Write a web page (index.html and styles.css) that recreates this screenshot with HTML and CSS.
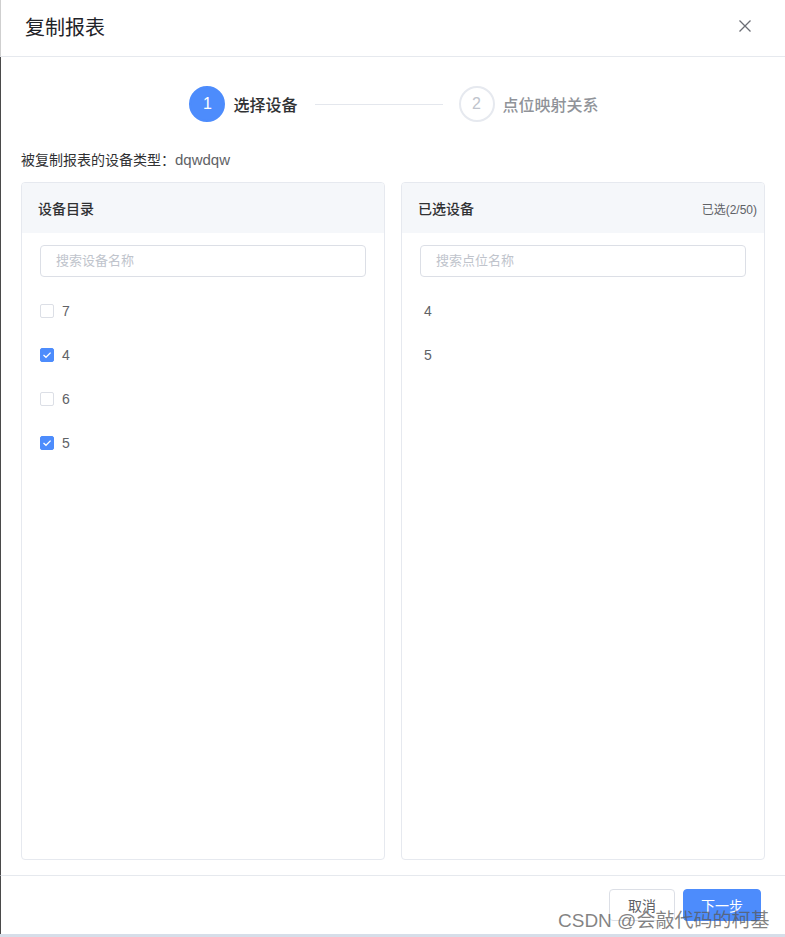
FILE: index.html
```html
<!DOCTYPE html>
<html lang="zh-CN">
<head>
<meta charset="utf-8">
<title>复制报表</title>
<link rel="stylesheet" href="styles.css">
</head>
<body>
<div class="dialog">
  <div class="header">
    <span class="title">复制报表</span>
    <svg class="close" width="14" height="14" viewBox="0 0 14 14"><path d="M1.5 1.5 L12.5 12.5 M12.5 1.5 L1.5 12.5" stroke="#6b6e75" stroke-width="1.3" fill="none"/></svg>
  </div>
  <div class="body">
    <div class="steps">
      <div class="step active"><span class="circle">1</span><span class="step-label">选择设备</span></div>
      <div class="step-line"></div>
      <div class="step"><span class="circle">2</span><span class="step-label">点位映射关系</span></div>
    </div>
    <div class="desc">被复制报表的设备类型：<span class="desc-val">dqwdqw</span></div>
    <div class="panels">
      <div class="panel">
        <div class="panel-head"><span class="panel-title">设备目录</span></div>
        <div class="panel-body">
          <div class="search">搜索设备名称</div>
          <ul class="list">
            <li class="item"><span class="cb"></span><span>7</span></li>
            <li class="item"><span class="cb checked"><svg width="10" height="8" viewBox="0 0 10 8"><path d="M1.5 4 L4 6.3 L8.6 1.6" stroke="#fff" stroke-width="1.3" fill="none"/></svg></span><span>4</span></li>
            <li class="item"><span class="cb"></span><span>6</span></li>
            <li class="item"><span class="cb checked"><svg width="10" height="8" viewBox="0 0 10 8"><path d="M1.5 4 L4 6.3 L8.6 1.6" stroke="#fff" stroke-width="1.3" fill="none"/></svg></span><span>5</span></li>
          </ul>
        </div>
      </div>
      <div class="panel">
        <div class="panel-head"><span class="panel-title">已选设备</span><span class="count">已选(2/50)</span></div>
        <div class="panel-body">
          <div class="search">搜索点位名称</div>
          <ul class="list plain">
            <li class="item"><span>4</span></li>
            <li class="item"><span>5</span></li>
          </ul>
        </div>
      </div>
    </div>
  </div>
  <div class="footer">
    <button class="btn">取消</button>
    <button class="btn primary">下一步</button>
  </div>
  <div class="watermark">CSDN @会敲代码的柯基</div>
</div>
</body>
</html>
```

FILE: styles.css
```css
* { box-sizing: border-box; }
html, body { margin: 0; padding: 0; }
body {
  background: #d6dee9;
  font-family: "Liberation Sans", "Noto Sans CJK SC", sans-serif;
  color: #303133;
  width: 785px;
  height: 937px;
  overflow: hidden;
}
.dialog {
  position: relative;
  width: 785px;
  height: 934px;
  background: #fff;
  display: flex;
  flex-direction: column;
}
.header {
  height: 57px;
  flex: none;
  border-left: 1px solid #cfcfcf;
  border-bottom: 1px solid #e6e9ee;
  padding: 0 33px 0 24px;
  display: flex;
  align-items: center;
  justify-content: space-between;
}
.title {
  font-size: 20px;
  color: #1f2329;
  margin-top: -3px;
}
.close { margin-top: -5px; }
.body {
  flex: 1;
  border-left: 1px solid #4a4a4a;
  padding: 29px 20px 15px 20px;
  display: flex;
  flex-direction: column;
}
.steps {
  display: flex;
  align-items: center;
  justify-content: center;
  height: 36px;
  padding-left: 2px;
}
.step { display: flex; align-items: center; }
.circle {
  width: 36px;
  height: 36px;
  border-radius: 50%;
  border: 2px solid #e6e9ef;
  color: #c0c4cc;
  font-size: 16px;
  display: flex;
  align-items: center;
  justify-content: center;
}
.step.active .circle {
  background: #4d8cfc;
  border-color: #4d8cfc;
  color: #fff;
}
.step-label {
  margin-left: 8px;
  font-size: 16px;
  font-weight: 500;
  color: #909399;
}
.step.active .step-label { color: #303133; }
.step-line {
  width: 128px;
  height: 1px;
  background: #e4e7ed;
  margin: 0 16px 0 17px;
}
.desc {
  margin-top: 28px;
  font-size: 14px;
  line-height: 20px;
  height: 20px;
  color: #303133;
}
.desc-val { font-size: 15px; color: #606266; }
.panels {
  margin-top: 12px;
  flex: 1;
  display: flex;
  gap: 16px;
}
.panel {
  flex: 1;
  border: 1px solid #e6e9ef;
  border-radius: 4px;
  display: flex;
  flex-direction: column;
  overflow: hidden;
}
.panel-head {
  height: 50px;
  background: #f5f7fa;
  display: flex;
  align-items: center;
  justify-content: space-between;
  padding: 0 7px 0 16px;
}
.panel-title { font-size: 14px; font-weight: 500; color: #303133; }
.count { font-size: 12px; color: #606266; }
.panel-body { padding: 12px 18px; }
.search {
  height: 32px;
  border: 1px solid #dcdfe6;
  border-radius: 4px;
  padding-left: 15px;
  font-size: 13px;
  line-height: 30px;
  color: #c0c4cc;
}
.list {
  list-style: none;
  margin: 12px 0 0 0;
  padding: 0;
}
.item {
  height: 44px;
  display: flex;
  align-items: center;
  font-size: 14px;
  color: #606266;
}
.list.plain .item { padding-left: 4px; }
.cb {
  width: 14px;
  height: 14px;
  border: 1px solid #dcdfe6;
  border-radius: 2px;
  margin-right: 8px;
  display: flex;
  align-items: center;
  justify-content: center;
}
.cb.checked { background: #4d8cfc; border-color: #4d8cfc; }
.footer {
  height: 59px;
  flex: none;
  border-top: 1px solid #e6e9ee;
  border-left: 1px solid #4a4a4a;
  display: flex;
  justify-content: flex-end;
  align-items: flex-start;
  gap: 8px;
  padding: 13px 24px 0 0;
}
.btn {
  height: 32px;
  padding: 0 18px;
  border: 1px solid #dcdfe6;
  border-radius: 4px;
  background: #fff;
  font-family: inherit;
  font-size: 14px;
  color: #606266;
}
.btn.primary {
  background: #4d8cfc;
  border-color: #4d8cfc;
  color: #fff;
  padding: 0 17px;
}
.watermark {
  position: absolute;
  left: 558px;
  top: 905px;
  font-size: 19px;
  color: rgba(90, 90, 90, 0.75);
  white-space: nowrap;
}
```
